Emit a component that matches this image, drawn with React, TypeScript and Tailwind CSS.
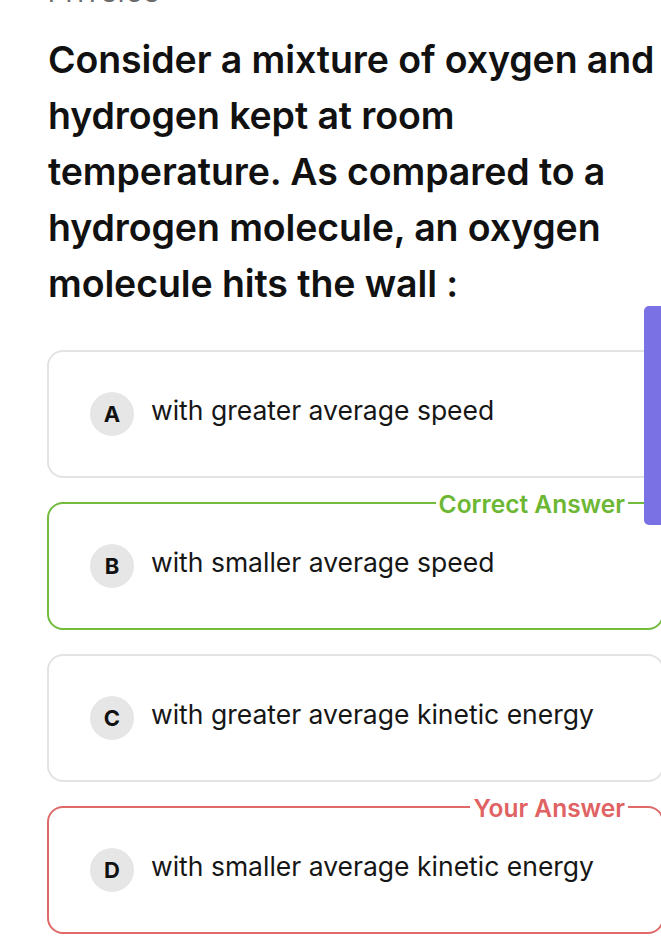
import React from 'react';

type Opt = { key: string; text: string; tag?: 'correct' | 'yours' };

const OPTIONS: Opt[] = [
  { key: 'A', text: 'with greater average speed' },
  { key: 'B', text: 'with smaller average speed', tag: 'correct' },
  { key: 'C', text: 'with greater average kinetic energy' },
  { key: 'D', text: 'with smaller average kinetic energy', tag: 'yours' },
];

function OptionCard({ opt }: { opt: Opt }) {
  const border =
    opt.tag === 'correct'
      ? 'border-[#72bb3e]'
      : opt.tag === 'yours'
      ? 'border-[#e06a6a]'
      : 'border-[#e3e3e3]';
  return (
    <div className={`relative w-[617px] h-[128px] rounded-[16px] border-2 ${border} flex items-center pl-[41px] bg-white`}>
      {opt.tag && (
        <div
          className={`absolute -top-[14px] right-[34px] px-[3px] bg-white text-[24.5px] leading-[28px] font-semibold ${
            opt.tag === 'correct' ? 'text-[#6cb733]' : 'text-[#e06262]'
          }`}
        >
          {opt.tag === 'correct' ? 'Correct Answer' : 'Your Answer'}
        </div>
      )}
      <div className="w-[44px] h-[44px] rounded-full bg-[#e6e6e6] flex items-center justify-center text-[22px] font-bold text-[#111] shrink-0">
        {opt.key}
      </div>
      <div className="ml-[17px] -mt-[6px] text-[26.5px] text-[#161616]">{opt.text}</div>
    </div>
  );
}

export default function App() {
  return (
    <div className="relative w-[661px] h-[939px] overflow-hidden bg-white font-['Inter',sans-serif]">
      <div className="pl-[48px] -mt-[20px] text-[26px] leading-[26px] text-[#6b6b6b] font-['Roboto',sans-serif] tracking-[1px]">
        PHYSICS
      </div>
      <h1 className="pl-[48px] mt-[26px] text-[37.5px] leading-[56px] font-semibold text-[#111] whitespace-nowrap tracking-[-0.1px]">
        Consider a mixture of oxygen and
        <br />
        hydrogen kept at room
        <br />
        temperature. As compared to a
        <br />
        hydrogen molecule, an oxygen
        <br />
        molecule hits the wall :
      </h1>
      <div className="mt-[38px] pl-[47px] flex flex-col gap-[24px]">
        {OPTIONS.map((o) => (
          <OptionCard key={o.key} opt={o} />
        ))}
      </div>
      <div className="absolute right-0 top-[306px] w-[17px] h-[219px] rounded-l-[5px] bg-[#7a72e4]" />
    </div>
  );
}
